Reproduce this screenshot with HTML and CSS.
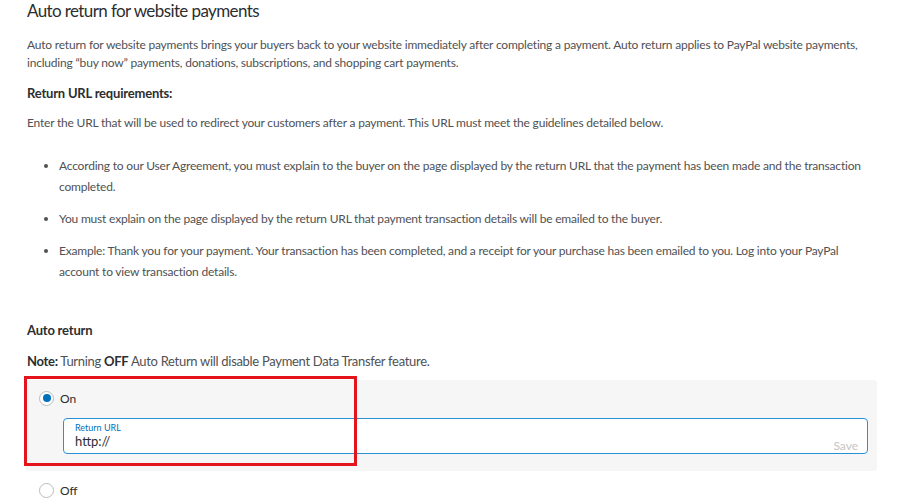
FILE: index.html
```html
<!DOCTYPE html>
<html lang="en">
<head>
    <meta charset="UTF-8">
    <title>Auto return for website payments</title>
    <link rel="stylesheet" href="styles.css">
</head>
<body>
    <div class="page">
        <h1 class="page-title">Auto return for website payments</h1>

        <p class="text">Auto return for website payments brings your buyers back to your website immediately after completing a payment. Auto return applies to PayPal website payments, including “buy now” payments, donations, subscriptions, and shopping cart payments.</p>

        <h3 class="section-title">Return URL requirements:</h3>
        <p class="text">Enter the URL that will be used to redirect your customers after a payment. This URL must meet the guidelines detailed below.</p>

        <ul class="rules">
            <li>According to our User Agreement, you must explain to the buyer on the page displayed by the return URL that the payment has been made and the transaction completed.</li>
            <li>You must explain on the page displayed by the return URL that payment transaction details will be emailed to the buyer.</li>
            <li>Example: Thank you for your payment. Your transaction has been completed, and a receipt for your purchase has been emailed to you. Log into your PayPal account to view transaction details.</li>
        </ul>

        <h3 class="section-title auto-title">Auto return</h3>
        <p class="text note"><strong>Note:</strong> Turning <strong>OFF</strong> Auto Return will disable Payment Data Transfer feature.</p>

        <!-- Selected option -->
        <div class="choice-box">
            <div class="radio-row">
                <span class="radio checked"></span>
                <span>On</span>
            </div>
            <div class="url-field">
                <span class="url-label">Return URL</span>
                <span class="url-value">http://</span>
                <span class="save-link">Save</span>
            </div>
            <div class="highlight"></div>
        </div>

        <div class="radio-row off-row">
            <span class="radio"></span>
            <span>Off</span>
        </div>
    </div>
</body>
</html>
```

FILE: styles.css
```css
body {
    margin: 0;
    overflow: hidden;
    background: #fff;
    font-family: Lato, "Open Sans", sans-serif;
    color: #4f5153;
}

.page {
    padding: 0 23px 0 27px;
}

.page-title {
    margin: 0;
    font-size: 17px;
    font-weight: 400;
    line-height: 21px;
    letter-spacing: -0.6px;
    color: #2c2e2f;
}

.text {
    margin: 15px 0 0;
    font-size: 12px;
    line-height: 18px;
    letter-spacing: -0.2px;
}

.section-title {
    margin: 12px 0 0;
    font-size: 13px;
    line-height: 18px;
    font-weight: 700;
    letter-spacing: -0.2px;
    color: #2c2e2f;
}

.section-title + .text {
    margin-top: 12px;
}

.section-title + .note {
    margin-top: 13px;
    font-size: 13px;
    letter-spacing: -0.3px;
}

.note strong {
    color: #2c2e2f;
}

.rules {
    margin: 23px 0 0;
    padding-left: 32px;
    font-size: 12px;
    line-height: 21px;
    letter-spacing: -0.2px;
}

.rules li + li {
    margin-top: 11px;
}

.auto-title {
    margin-top: 39px;
}

/* Auto return options */
.choice-box {
    position: relative;
    margin: 10px 0 0 -2px;
    padding: 9px 9px 17px 14px;
    background: #f6f6f6;
    border-radius: 4px;
}

.radio-row {
    display: flex;
    align-items: center;
    gap: 6px;
    height: 18px;
    font-size: 12px;
    color: #2c2e2f;
}

.radio {
    box-sizing: border-box;
    width: 15px;
    height: 15px;
    border: 1px solid #b9bcbf;
    border-radius: 50%;
    background: #fff;
    display: flex;
    justify-content: center;
    align-items: center;
}

.radio.checked::after {
    content: '';
    width: 8px;
    height: 8px;
    border-radius: 50%;
    background: #0070ba;
}

.url-field {
    position: relative;
    box-sizing: border-box;
    height: 36px;
    margin: 11px 0 0 24px;
    padding: 3px 11px 0;
    border: 1px solid #2a91d8;
    border-radius: 4px;
    background: #fff;
    display: flex;
    flex-direction: column;
}

.url-label {
    font-size: 9px;
    line-height: 11px;
    color: #0070ba;
}

.url-value {
    font-size: 13px;
    line-height: 16px;
    color: #2c2e2f;
}

.save-link {
    position: absolute;
    right: 9px;
    bottom: 0;
    font-size: 12px;
    color: #c5c5c5;
}

.highlight {
    position: absolute;
    left: -1px;
    top: -4px;
    width: 333px;
    height: 90px;
    box-sizing: border-box;
    border: 3px solid #e3141b;
    pointer-events: none;
}

.off-row {
    margin: 10px 0 0 12px;
}
```
